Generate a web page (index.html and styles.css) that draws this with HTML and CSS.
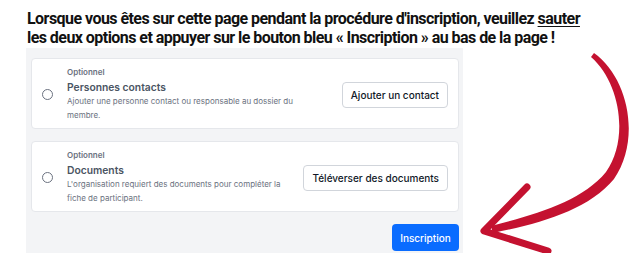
FILE: index.html
```html
<!DOCTYPE html>
<html lang="fr">
<head>
<meta charset="UTF-8">
<meta name="viewport" content="width=device-width, initial-scale=1.0">
<title>Inscription</title>
<link rel="stylesheet" href="styles.css">
</head>
<body>
<div class="note">
  Lorsque vous êtes sur cette page pendant la procédure d'inscription, veuillez <u>sauter</u><br>
  les deux options et appuyer sur le bouton bleu « Inscription » au bas de la page !
</div>
<div class="panel">
  <div class="option">
    <span class="radio"></span>
    <div class="option-text">
      <div class="option-tag">Optionnel</div>
      <div class="option-title">Personnes contacts</div>
      <div class="option-desc">Ajouter une personne contact ou responsable au dossier du membre.</div>
    </div>
    <button class="btn">Ajouter un contact</button>
  </div>
  <div class="option">
    <span class="radio"></span>
    <div class="option-text">
      <div class="option-tag">Optionnel</div>
      <div class="option-title">Documents</div>
      <div class="option-desc">L'organisation requiert des documents pour compléter la fiche de participant.</div>
    </div>
    <button class="btn">Téléverser des documents</button>
  </div>
  <div class="actions">
    <button class="btn-primary">Inscription</button>
  </div>
</div>
<svg class="arrow" width="640" height="259" viewBox="0 0 640 259">
  <!-- tapered shaft -->
  <path d="M594 53 C 629 78, 641 140, 614 179 C 588 210, 542 223, 493 233 L 491 226 C 538 214, 582 201, 606 172 C 629 140, 621 83, 591 57 Z" fill="#c41230"/>
  <path d="M527 187 L 484 231 L 548 251" fill="none" stroke="#c41230" stroke-width="7" stroke-linecap="round" stroke-linejoin="round"/>
</svg>
</body>
</html>
```

FILE: styles.css
```css
body {
  margin: 0;
  background: #fff;
  font-family: Inter, "Noto Sans", sans-serif;
  position: relative;
}

.note {
  font-family: Roboto, "Liberation Sans", sans-serif;
  font-weight: 700;
  font-size: 16px;
  line-height: 19px;
  color: #111;
  padding: 9px 0 0 27px;
  height: 39px;
  letter-spacing: -0.55px;
}

.note u {
  text-underline-offset: 2px;
}

.panel {
  margin-left: 26px;
  width: 437px;
  height: 205px;
  box-sizing: border-box;
  background: #f3f4f6;
  padding: 10px 4px 0 5px;
  display: flex;
  flex-direction: column;
  gap: 12px;
}

.option {
  display: flex;
  align-items: center;
  background: #fff;
  border: 1px solid #e5e7eb;
  border-radius: 4px;
  padding: 8px 10px 6px 10px;
}

.radio {
  width: 9px;
  height: 9px;
  border: 1.5px solid #6b7280;
  border-radius: 50%;
  flex-shrink: 0;
  margin-right: 14px;
}

.option-text {
  flex: 1;
  max-width: 229px;
}

.option-tag {
  font-size: 8px;
  font-weight: 600;
  line-height: 10px;
  color: #6b7280;
  margin-bottom: 3px;
}

.option-title {
  font-size: 10.3px;
  font-weight: 600;
  line-height: 14px;
  color: #4b5563;
}

.option-desc {
  font-size: 8px;
  line-height: 14px;
  color: #6b7280;
}

.btn {
  margin-left: auto;
  font-family: Inter, sans-serif;
  font-size: 10px;
  font-weight: 500;
  color: #111827;
  background: #fff;
  border: 1px solid #d1d5db;
  border-radius: 4px;
  height: 26px;
  padding: 0 8px;
}

.actions {
  display: flex;
  justify-content: flex-end;
}

.btn-primary {
  font-family: Inter, sans-serif;
  font-size: 10px;
  font-weight: 500;
  color: #fff;
  background: #0a6cff;
  border: none;
  border-radius: 4px;
  height: 27px;
  width: 67px;
  padding: 0;
}

.arrow {
  position: absolute;
  top: 0;
  left: 0;
  pointer-events: none;
}
```
